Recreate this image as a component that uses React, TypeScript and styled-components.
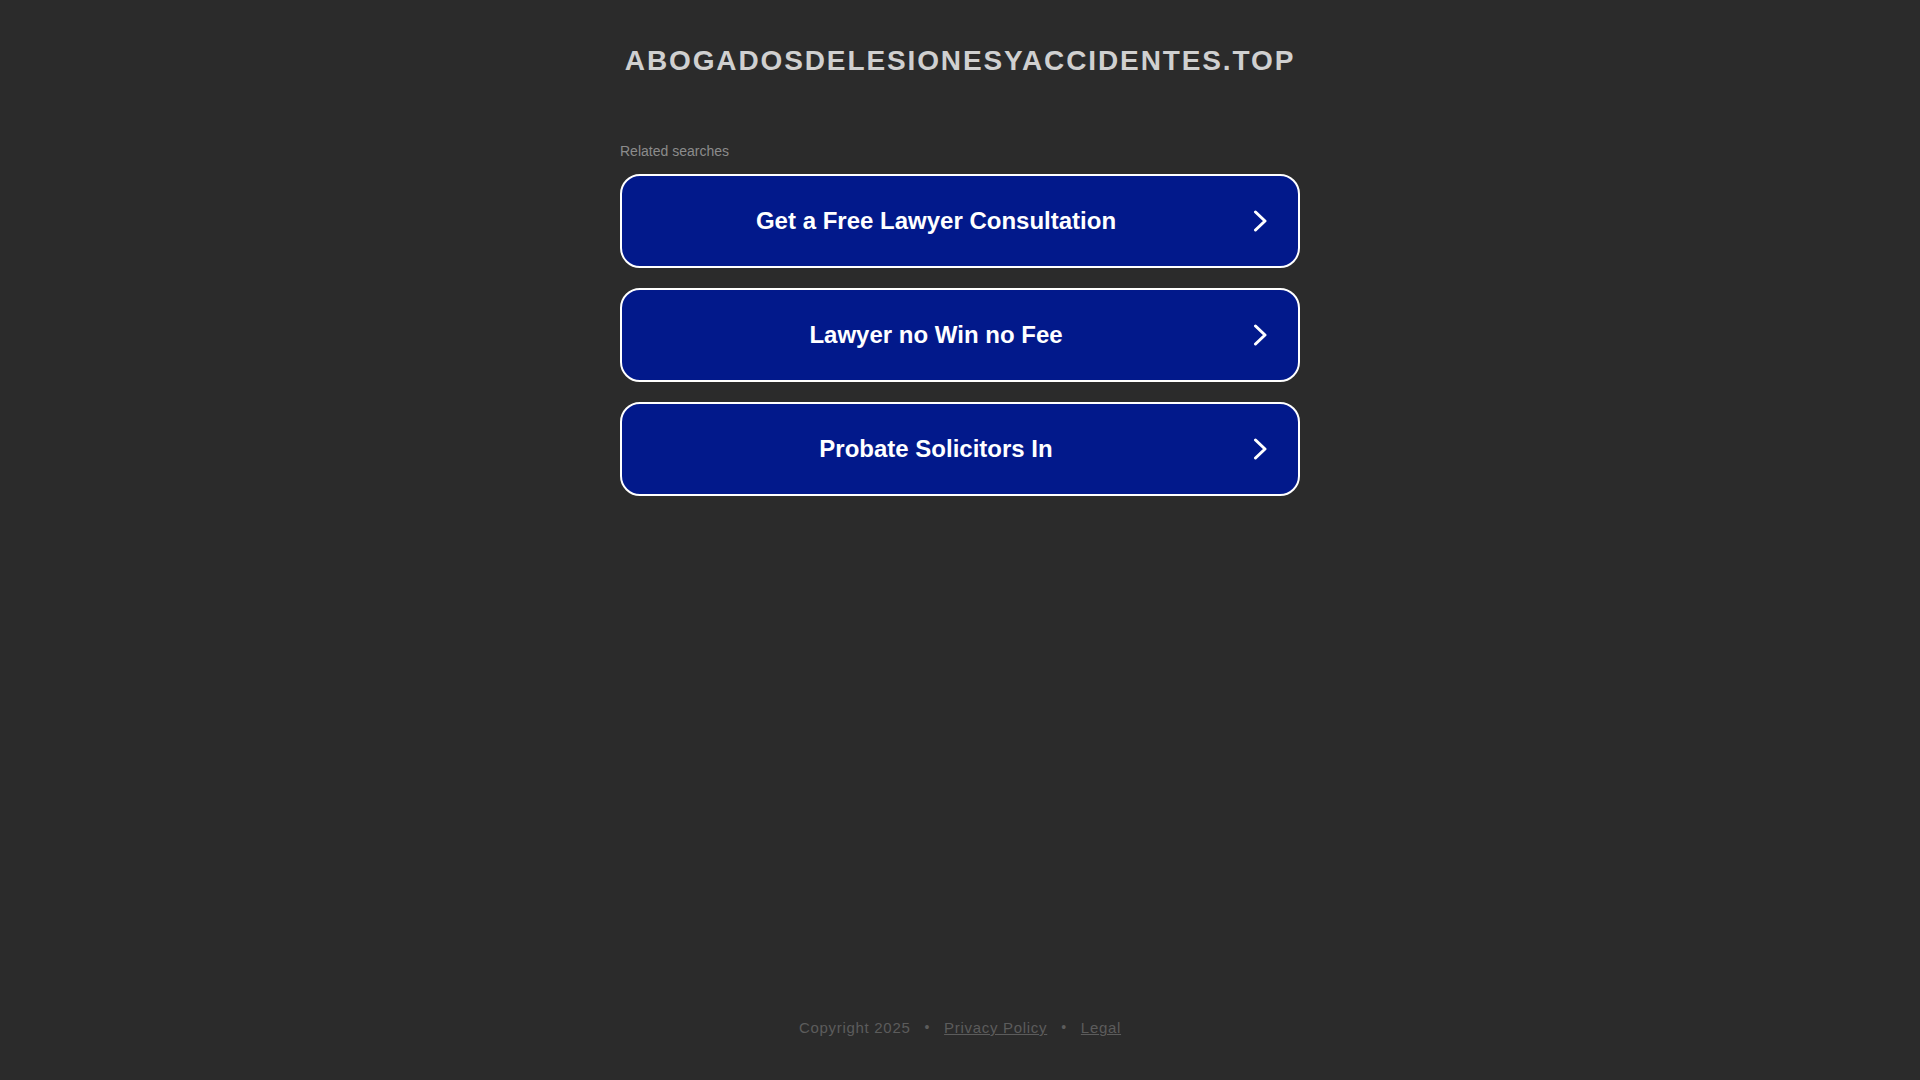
import styled, { createGlobalStyle } from "styled-components";

const GlobalStyle = createGlobalStyle`
  html, body {
    margin: 0;
    padding: 0;
    background: #2b2b2b;
    font-family: Arial, "Liberation Sans", Helvetica, sans-serif;
  }
`;

const searches = [
  "Get a Free Lawyer Consultation",
  "Lawyer no Win no Fee",
  "Probate Solicitors In",
];

const ChevronIcon = () => (
  <svg width="15" height="22" viewBox="0 0 15 22" fill="none">
    <polyline
      points="2.5,2 12,11 2.5,20"
      stroke="#fff"
      strokeWidth="3"
      strokeLinecap="round"
      strokeLinejoin="round"
    />
  </svg>
);

const App = () => {
  return (
    <>
      <GlobalStyle />
      <Page>
        <Header>
          <Domain>abogadosdelesionesyaccidentes.top</Domain>
        </Header>
        <AdsBlock>
          <AdsLabel>Related searches</AdsLabel>
          <AdsList>
            {searches.map((term) => (
              <AdLink key={term} href="#">
                <AdText>{term}</AdText>
                <ChevronWrapper>
                  <ChevronIcon />
                </ChevronWrapper>
              </AdLink>
            ))}
          </AdsList>
        </AdsBlock>
        <Footer>
          <span>Copyright 2025</span>
          <Bullet>•</Bullet>
          <FooterLink href="#">Privacy Policy</FooterLink>
          <Bullet>•</Bullet>
          <FooterLink href="#">Legal</FooterLink>
        </Footer>
      </Page>
    </>
  );
};

export default App;

const Page = styled.div`
  min-height: 100vh;
  display: flex;
  flex-direction: column;
  align-items: center;
  box-sizing: border-box;
  padding-top: 45px;
`;

const Header = styled.header`
  text-align: center;
`;

const Domain = styled.h1`
  margin: 0;
  font-size: 28px;
  font-weight: bold;
  line-height: 32px;
  letter-spacing: 1.88px;
  text-transform: uppercase;
  color: #d0d0d0;
`;

const AdsBlock = styled.section`
  width: 680px;
  margin-top: 66px;
`;

const AdsLabel = styled.div`
  font-size: 14px;
  line-height: 16px;
  color: #8c8c8c;
  margin-bottom: 15px;
`;

const AdsList = styled.div`
  display: flex;
  flex-direction: column;
  gap: 20px;
`;

const AdLink = styled.a`
  display: flex;
  align-items: center;
  height: 94px;
  box-sizing: border-box;
  border: 2px solid #fff;
  border-radius: 20px;
  background: #02198b;
  text-decoration: none;
  color: #fff;
`;

const AdText = styled.span`
  flex: 1;
  text-align: center;
  font-size: 24px;
  font-weight: bold;
`;

const ChevronWrapper = styled.span`
  display: flex;
  width: 48px;
  justify-content: flex-start;
  & > svg {
    margin-left: 3px;
  }
`;

const Footer = styled.footer`
  margin-top: auto;
  padding-bottom: 44px;
  display: flex;
  align-items: center;
  font-size: 15px;
  line-height: 17px;
  letter-spacing: 0.7px;
  color: #5c5c5c;
`;

const Bullet = styled.span`
  margin: 0 14px;
  font-size: 14px;
`;

const FooterLink = styled.a`
  color: #5c5c5c;
  text-decoration: underline;
`;
